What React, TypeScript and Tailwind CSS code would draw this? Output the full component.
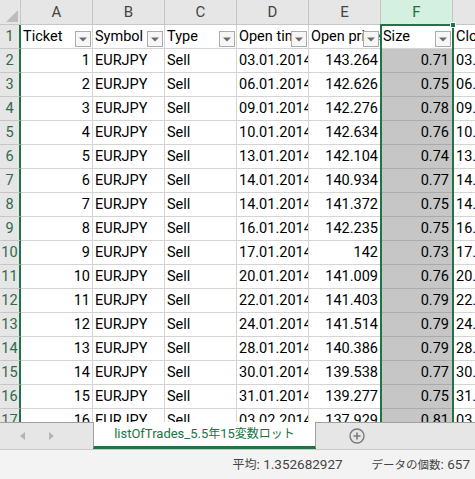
import React from "react";

const opens = [
  ["03.01.2014", "143.264", "0.71"],
  ["06.01.2014", "142.626", "0.75"],
  ["09.01.2014", "142.276", "0.78"],
  ["10.01.2014", "142.634", "0.76"],
  ["13.01.2014", "142.104", "0.74"],
  ["14.01.2014", "140.934", "0.77"],
  ["14.01.2014", "141.372", "0.75"],
  ["16.01.2014", "142.235", "0.75"],
  ["17.01.2014", "142", "0.73"],
  ["20.01.2014", "141.009", "0.76"],
  ["22.01.2014", "141.403", "0.79"],
  ["24.01.2014", "141.514", "0.79"],
  ["28.01.2014", "140.386", "0.79"],
  ["30.01.2014", "139.538", "0.77"],
  ["31.01.2014", "139.277", "0.75"],
  ["03.02.2014", "137.929", "0.81"],
];

const FONT = { fontFamily: 'Roboto, "Noto Sans CJK JP", sans-serif' };

function Drop() {
  return (
    <div className="absolute right-[1px] bottom-[1px] w-[16px] h-[16px] bg-[#f6f6f6] border border-[#acacac] flex items-center justify-center">
      <svg width="8" height="5" viewBox="0 0 8 5">
        <path d="M0 0.5 L8 0.5 L4 4.5 Z" fill="#6b6b6b" />
      </svg>
    </div>
  );
}

function HeadCell({ label }: { label: string }) {
  return (
    <div className="relative w-[72px] h-[24px] shrink-0 border-r border-b border-[#d4d4d4] overflow-hidden whitespace-nowrap pl-[2px] text-[14.5px] leading-[24px] text-black">
      {label}
      <Drop />
    </div>
  );
}

export default function App() {
  const cols = ["A", "B", "C", "D", "E", "F"];
  return (
    <div className="w-[475px] h-[479px] overflow-hidden bg-white flex flex-col" style={FONT}>
      <div className="relative h-[422px] shrink-0 overflow-hidden">
        {/* column header row */}
        <div className="flex h-[25px]">
          <div className="relative w-[21px] h-[25px] shrink-0 bg-[#e6e6e6] border-r border-b border-[#c6c6c6]">
            <svg className="absolute right-[2px] bottom-[2px]" width="12" height="12" viewBox="0 0 12 12">
              <path d="M12 0 L12 12 L0 12 Z" fill="#bdbdbd" />
            </svg>
          </div>
          {cols.map((c) => (
            <div
              key={c}
              className={
                c === "F"
                  ? "w-[72px] h-[25px] shrink-0 bg-[#d3f0e0] border-r border-b border-[#c6c6c6] text-[#217346] text-[15px] leading-[24px] text-center"
                  : "w-[72px] h-[25px] shrink-0 bg-[#e6e6e6] border-r border-b border-[#c6c6c6] text-[#444444] text-[15px] leading-[24px] text-center"
              }
            >
              {c}
            </div>
          ))}
          <div className="flex-1 h-[25px] bg-[#e6e6e6] border-b border-[#c6c6c6]" />
        </div>

        {/* row 1 headers */}
        <div className="flex h-[24px]">
          <div className="w-[21px] h-[24px] shrink-0 bg-[#e6e6e6] border-r-2 border-r-[#217346] border-b border-b-[#c6c6c6] text-[14.5px] leading-[23px] text-center text-[#2f6b4c]">
            1
          </div>
          <HeadCell label="Ticket" />
          <HeadCell label="Symbol" />
          <HeadCell label="Type" />
          <HeadCell label="Open time" />
          <HeadCell label="Open price" />
          <HeadCell label="Size" />
          <div className="flex-1 h-[24px] border-b border-[#d4d4d4] overflow-hidden whitespace-nowrap pl-[3px] text-[14.5px] leading-[24px] text-black">
            Close time
          </div>
        </div>

        {opens.map((r, i) => (
          <div key={i} className="flex h-[24px]">
            <div className="w-[21px] h-[24px] shrink-0 bg-[#e6e6e6] border-r-2 border-r-[#217346] border-b border-b-[#c6c6c6] text-[14.5px] leading-[23px] text-center text-[#2f6b4c]">
              {i + 2}
            </div>
            <div className="w-[72px] h-[24px] shrink-0 border-r border-b border-[#d4d4d4] pr-[2px] text-right text-[14.5px] leading-[24px] text-black">
              {i + 1}
            </div>
            <div className="w-[72px] h-[24px] shrink-0 border-r border-b border-[#d4d4d4] pl-[2px] text-[14.5px] leading-[24px] text-black">
              EURJPY
            </div>
            <div className="w-[72px] h-[24px] shrink-0 border-r border-b border-[#d4d4d4] pl-[2px] text-[14.5px] leading-[24px] text-black">
              Sell
            </div>
            <div className="w-[72px] h-[24px] shrink-0 border-r border-b border-[#d4d4d4] pl-[2px] overflow-hidden whitespace-nowrap text-[14.5px] leading-[24px] text-black">
              {r[0]}
            </div>
            <div className="w-[72px] h-[24px] shrink-0 border-r border-b border-[#d4d4d4] pr-[2px] text-right text-[14.5px] leading-[24px] text-black">
              {r[1]}
            </div>
            <div className="w-[72px] h-[24px] shrink-0 bg-[#c6c6c6] border-r border-b border-[#ababab] pr-[3px] text-right text-[14.5px] leading-[24px] text-black">
              {r[2]}
            </div>
            <div className="flex-1 h-[24px] border-b border-[#d4d4d4] pl-[3px] overflow-hidden whitespace-nowrap text-[14.5px] leading-[24px] text-black">
              {r[0]}
            </div>
          </div>
        ))}

        {/* selection box over column F */}
        <div className="absolute left-[380px] top-[24px] w-[74px] h-[420px] border-2 border-[#217346] pointer-events-none">
          <div className="absolute -right-[4px] -top-[4px] w-[6px] h-[6px] bg-[#217346] border border-white" />
        </div>
      </div>

      {/* sheet tab bar */}
      <div className="relative h-[28px] shrink-0 bg-[#e6e6e6] border-t border-[#a0a0a0] border-b border-b-[#c8c8c8] flex items-stretch">
        <div className="w-[93px] shrink-0 flex items-center">
          <svg className="ml-[20px]" width="5" height="8" viewBox="0 0 5 8">
            <path d="M5 0 L5 8 L0 4 Z" fill="#b4b4b4" />
          </svg>
          <svg className="ml-[24px]" width="5" height="8" viewBox="0 0 5 8">
            <path d="M0 0 L0 8 L5 4 Z" fill="#b4b4b4" />
          </svg>
        </div>
        <div className="-mt-[1px] w-[223px] shrink-0 bg-white border-l border-r border-[#a0a0a0] border-b-[3px] border-b-[#217346] flex items-center justify-center text-[13px] text-[#217346] whitespace-nowrap">
          <span>
            listOfTrades_5.5<span className="text-[12px]">年</span>15<span className="text-[12px]">変数ロット</span>
          </span>
        </div>
        <div className="flex items-center pl-[33px]">
          <svg width="16" height="16" viewBox="0 0 16 16">
            <circle cx="8" cy="8" r="7" fill="none" stroke="#7a7a7a" strokeWidth="1.4" />
            <path d="M8 4.5 V11.5 M4.5 8 H11.5" stroke="#7a7a7a" strokeWidth="1.6" />
          </svg>
        </div>
      </div>

      {/* status bar */}
      <div className="flex-1 bg-[#f3f3f3] flex items-center justify-end pr-[5px] gap-[29px] text-[13.5px] text-[#444444] whitespace-nowrap">
        <span>
          <span className="text-[12px]">平均</span>: 1.352682927
        </span>
        <span>
          <span className="text-[11.5px]">データの個数</span>: 657
        </span>
      </div>
    </div>
  );
}
